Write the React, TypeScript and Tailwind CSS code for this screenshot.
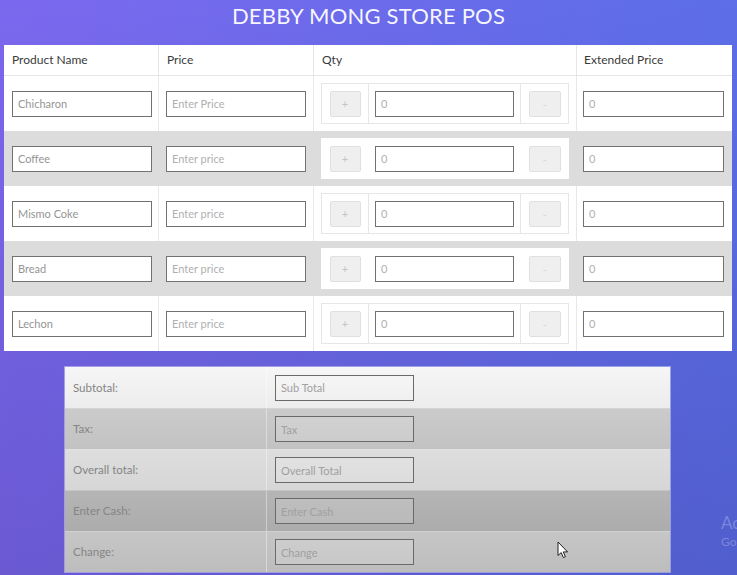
import React from "react";

const products = [
  { name: "Chicharon", price: "Enter Price" },
  { name: "Coffee", price: "Enter price" },
  { name: "Mismo Coke", price: "Enter price" },
  { name: "Bread", price: "Enter price" },
  { name: "Lechon", price: "Enter price" },
];

const totals = [
  { label: "Subtotal:", ph: "Sub Total", bg: "bg-[linear-gradient(to_bottom,#f6f6f6,#ececec)]" },
  { label: "Tax:", ph: "Tax", bg: "bg-[linear-gradient(to_bottom,#cbcbcb,#c2c2c2)]" },
  { label: "Overall total:", ph: "Overall Total", bg: "bg-[linear-gradient(to_bottom,#dedede,#d6d6d6)]" },
  { label: "Enter Cash:", ph: "Enter Cash", bg: "bg-[linear-gradient(to_bottom,#b5b5b5,#acacac)]" },
  { label: "Change:", ph: "Change", bg: "bg-[linear-gradient(to_bottom,#c6c6c6,#bdbdbd)]" },
];

const inputCls =
  "h-[26px] w-full border border-[#727272] bg-white px-[5px] text-[11px] text-[#959595] placeholder:text-[#b0b0b0] outline-none font-['Lato',sans-serif]";

export default function App() {
  return (
    <div className="relative h-[575px] w-full overflow-hidden bg-[linear-gradient(to_bottom,rgba(0,0,0,0),rgba(20,10,60,0.16)),linear-gradient(to_right,#7b68ee,#5c6ee8)] font-['Lato',sans-serif]">
      <h1 className="h-[45px] pt-[2px] text-center text-[22px] font-normal leading-[28px] tracking-[0.2px] text-white/95">
        DEBBY MONG STORE POS
      </h1>

      <div className="ml-[4px] w-[728px] bg-white">
        <div className="grid h-[31px] grid-cols-[155px_155px_263px_155px] border-b border-[#e6e6e6] text-[12px] text-[#3a3a3a]">
          <div className="flex items-center border-r border-[#e6e6e6] px-[8px]">Product Name</div>
          <div className="flex items-center border-r border-[#e6e6e6] px-[8px]">Price</div>
          <div className="flex items-center border-r border-[#e6e6e6] px-[8px]">Qty</div>
          <div className="flex items-center px-[7px]">Extended Price</div>
        </div>
        {products.map((p, i) => {
          const gray = i % 2 === 1;
          const div = gray ? "border-[#dcdcdc]" : "border-[#e8e8e8]";
          const inner = gray ? "border-white" : "border-[#e6e6e6]";
          return (
            <div
              key={p.name}
              className={`grid h-[55px] grid-cols-[155px_155px_263px_155px] ${gray ? "bg-[#dcdcdc]" : "bg-white"}`}
            >
              <div className={`flex items-center border-r ${div} pl-[8px] pr-[6px]`}>
                <input className={inputCls} defaultValue={p.name} />
              </div>
              <div className={`flex items-center border-r ${div} pl-[7px] pr-[7px]`}>
                <input className={inputCls} placeholder={p.price} />
              </div>
              <div className={`flex items-center border-r ${div} px-[7px]`}>
                <div className={`flex h-[41px] w-[249px] border ${inner} bg-white`}>
                  <div className={`flex w-[47px] items-center justify-center border-r ${inner}`}>
                    <button className="h-[26px] w-[31px] rounded-[2px] border border-[#e0e0e0] bg-[#efefef] text-[11px] leading-none text-[#c4c4c4]">
                      +
                    </button>
                  </div>
                  <div className="flex flex-1 items-center px-[6px]">
                    <input className={inputCls} placeholder="0" />
                  </div>
                  <div className={`flex w-[48px] items-center justify-center border-l ${inner}`}>
                    <button className="h-[26px] w-[32px] rounded-[2px] border border-[#e0e0e0] bg-[#efefef] text-[10px] leading-none text-[#d0d0d0]">
                      -
                    </button>
                  </div>
                </div>
              </div>
              <div className="flex items-center pl-[6px] pr-[8px]">
                <input className={inputCls} placeholder="0" />
              </div>
            </div>
          );
        })}
      </div>

      <div className="ml-[65px] mt-[16px] w-[605px] ring-1 ring-white/40">
        {totals.map((t, i) => (
          <div
            key={t.label}
            className={`flex h-[41px] ${t.bg} ${i > 0 ? "border-t border-white/30" : ""}`}
          >
            <div className="flex w-[202px] items-center border-r border-white/40 pl-[8px] text-[11.5px] text-[#858585]">
              {t.label}
            </div>
            <div className="flex flex-1 items-center pl-[8px]">
              <input
                className="h-[26px] w-[139px] border border-[#6a6a6a] bg-white/15 px-[5px] text-[11px] text-[#8a8a8a] placeholder:text-[#a0a0a0] outline-none font-['Lato',sans-serif]"
                placeholder={t.ph}
              />
            </div>
          </div>
        ))}
      </div>

      <div className="pointer-events-none absolute left-[721px] top-[512px] whitespace-nowrap text-white/25">
        <div className="text-[17px] leading-[22px]">Activate Windows</div>
        <div className="text-[12px] leading-[16px]">Go to Settings to activate Windows.</div>
      </div>

      <svg
        className="pointer-events-none absolute left-[557px] top-[541px]"
        width="12"
        height="18"
        viewBox="0 0 12 18"
      >
        <path
          d="M1 1 L1 14.5 L4.2 11.6 L6.4 16.6 L8.4 15.7 L6.3 10.9 L10.6 10.9 Z"
          fill="white"
          stroke="#222"
          strokeWidth="1"
          strokeLinejoin="round"
        />
      </svg>
    </div>
  );
}
